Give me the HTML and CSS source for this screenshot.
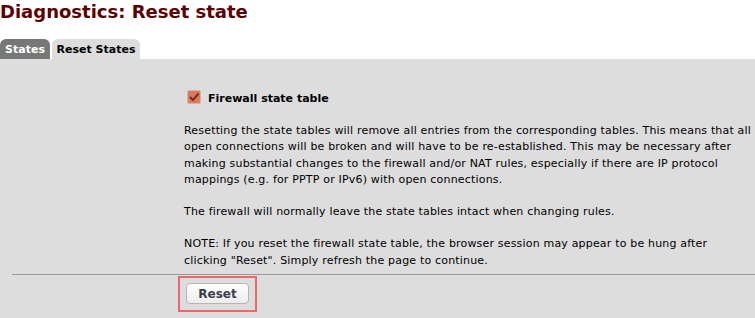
FILE: index.html
```html
<!DOCTYPE html>
<html>
<head>
<meta charset="utf-8">
<link rel="stylesheet" href="styles.css">
</head>
<body>
<h1 class="title">Diagnostics: Reset state</h1>
<div class="tabs">
  <a class="tab tab-inactive">States</a>
  <a class="tab tab-active">Reset States</a>
</div>
<div class="panel">
  <div class="row">
    <div class="label-col"></div>
    <div class="content-col">
      <div class="check-line">
        <svg class="checkbox" width="14" height="14" viewBox="0 0 14 14">
          <rect x="0.5" y="0.5" width="13" height="13" rx="1.5" fill="#e07a55" stroke="#c9b8b0"/>
          <path d="M3 7 L6 10 L11.5 3.5" fill="none" stroke="#6b3326" stroke-width="2"/>
        </svg>
        <span class="check-label">Firewall state table</span>
      </div>
      <p class="desc">Resetting the state tables will remove all entries from the corresponding tables. This means that all open connections will be broken and will have to be re-established. This may be necessary after making substantial changes to the firewall and/or NAT rules, especially if there are IP protocol mappings (e.g. for PPTP or IPv6) with open connections.</p>
      <p class="desc">The firewall will normally leave the state tables intact when changing rules.</p>
      <p class="desc">NOTE: If you reset the firewall state table, the browser session may appear to be hung after clicking&nbsp;"Reset". Simply refresh the page to continue.</p>
    </div>
  </div>
  <div class="divider"></div>
  <div class="row">
    <div class="label-col"></div>
    <div class="content-col">
      <div class="highlight"><button class="btn">Reset</button></div>
    </div>
  </div>
</div>
</body>
</html>
```
FILE: styles.css
```css
html, body {
  margin: 0;
  padding: 0;
  background: #ffffff;
  font-family: "DejaVu Sans", Verdana, sans-serif;
  font-size: 11px;
  color: #000000;
}
.title {
  margin: 0;
  padding: 1px 0 0 0;
  font-size: 18px;
  font-weight: bold;
  line-height: 22px;
  color: #5c0000;
}
.tabs {
  display: flex;
  gap: 2px;
  margin-top: 16px;
  height: 20px;
}
.tab {
  display: block;
  height: 20px;
  line-height: 21px;
  font-weight: bold;
  font-size: 11px;
  white-space: nowrap;
  border-radius: 6px 6px 0 0;
  box-sizing: border-box;
  text-align: center;
}
.tab-inactive {
  background: #777777;
  color: #ffffff;
  width: 50px;
}
.tab-active {
  background: #dddddd;
  color: #000000;
  width: 88px;
}
.panel {
  background: #dddddd;
  height: 260px;
  padding-top: 29px;
  box-sizing: border-box;
}
.row {
  display: grid;
  grid-template-columns: 184px 1fr;
}
.content-col {
  padding-right: 3px;
}
.check-line {
  display: flex;
  align-items: center;
  gap: 7px;
  height: 18px;
  padding-left: 3px;
}
.checkbox {
  display: block;
}
.check-label {
  font-weight: bold;
  margin-top: 2px;
}
.desc {
  margin: 17px 0 0 0;
  line-height: 16.3px;
  letter-spacing: 0.18px;
}
.desc + .desc {
  margin-top: 16px;
}
.divider {
  margin: 5px 0 0 12px;
  border-top: 1px solid #999999;
}
.highlight {
  display: inline-block;
  margin: 1px 0 0 -6px;
  padding: 5px 6px 6px 6px;
  border: 2px solid #e86a6e;
}
.btn {
  display: block;
  width: 63px;
  height: 21px;
  font-family: "DejaVu Sans", Verdana, sans-serif;
  font-size: 12px;
  font-weight: bold;
  color: #38404c;
  background: linear-gradient(#ffffff, #ececec);
  border: 1px solid #b5b5b5;
  border-radius: 4px;
  padding: 0;
}
```
